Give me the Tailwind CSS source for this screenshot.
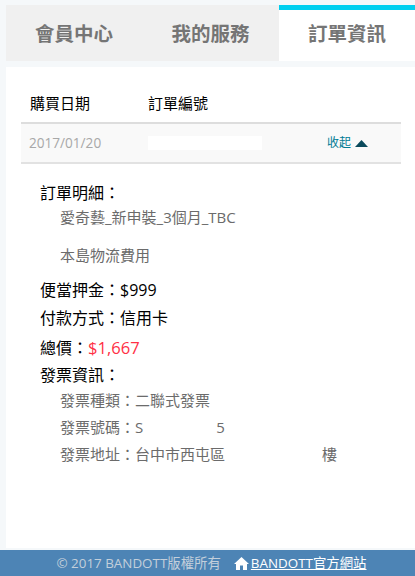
<!DOCTYPE html>
<html lang="zh-Hant">
<head>
<meta charset="utf-8">
<script src="https://cdn.jsdelivr.net/npm/@tailwindcss/browser@4"></script>
</head>
<body class="m-0 bg-[#f5f8fa] font-['Open_Sans','Noto_Sans_CJK_TC',sans-serif]">
<div class="flex h-[576px] w-[415px] flex-col overflow-hidden">
  <div class="ml-[6px] mt-[5px] flex h-[56px] shrink-0 text-[19.5px] font-bold text-[#757575]">
    <div class="flex w-[136px] items-center justify-center bg-[#f0f0f0] pt-[1px]">會員中心</div>
    <div class="flex w-[137px] items-center justify-center bg-[#f0f0f0] pt-[1px]">我的服務</div>
    <div class="flex w-[136px] items-center justify-center border-t-[5px] border-[#00cfef] bg-white pb-[4px]">訂單資訊</div>
  </div>
  <main class="ml-[6px] mt-[6px] h-[481px] shrink-0 bg-white">
    <div class="ml-[15px] w-[380px]">
      <div class="flex h-[55px] items-end pb-[9px] text-[15px] leading-[20px] text-black">
        <div class="ml-[9px] w-[118px]">購買日期</div>
        <div>訂單編號</div>
      </div>
      <div class="flex h-[42px] items-center border-y-2 border-t-[#dddddd] border-b-[#e2e2e2] bg-[#f9f9f9] text-[13.6px]">
        <div class="ml-[8px] w-[119px] pt-[1px] text-[#a8a8a8]">2017/01/20</div>
        <div class="h-[14px] w-[114px] bg-white"></div>
        <div class="ml-[65px] flex items-center gap-[4px] text-[12px] text-[#007b94]">
          <span>收起</span>
          <svg width="13" height="7" viewBox="0 0 13 7"><path d="M6.5 0L13 7H0Z" fill="#0b4a5c"/></svg>
        </div>
      </div>
    </div>
    <div class="ml-[34px] mt-[16px] flex flex-col text-[16px] text-black">
      <div class="leading-[26px]">訂單明細：</div>
      <div class="ml-[20px] flex flex-col text-[15px] text-[#6b6b6b]">
        <div class="mt-[-1px] leading-[24px]">愛奇藝_新申裝_3個月_TBC</div>
        <div class="mt-[14px] leading-[24px]">本島物流費用</div>
      </div>
      <div class="mt-[10px] leading-[26px]">便當押金：$999</div>
      <div class="mt-[2px] leading-[26px]">付款方式：信用卡</div>
      <div class="mt-[4px] leading-[26px]">總價：<span class="text-[16.6px] text-[#ff3045]">$1,667</span></div>
      <div class="mt-[1px] leading-[26px]">發票資訊：</div>
      <div class="ml-[20px] flex flex-col text-[15px] leading-[27px] text-[#6b6b6b]">
        <div class="mt-[-1px]">發票種類：二聯式發票</div>
        <div>發票號碼：S<span class="ml-[73px]">5</span></div>
        <div>發票地址：台中市西屯區<span class="ml-[97px]">樓</span></div>
      </div>
    </div>
  </main>
  <footer class="mt-[2px] flex h-[26px] shrink-0 items-center justify-center bg-[#4d84b5] pl-[8px] text-[13.4px] text-[#c3cfdb]">
    <span>© 2017 BANDOTT版權所有</span>
    <svg class="ml-[13px] mr-[2px]" width="15" height="13" viewBox="0 0 15 13"><path d="M7.5 0L15 7H13V13H9V8.5H6V13H2V7H0Z" fill="#fff"/></svg>
    <a class="text-white underline">BANDOTT官方網站</a>
  </footer>
</div>
</body>
</html>
